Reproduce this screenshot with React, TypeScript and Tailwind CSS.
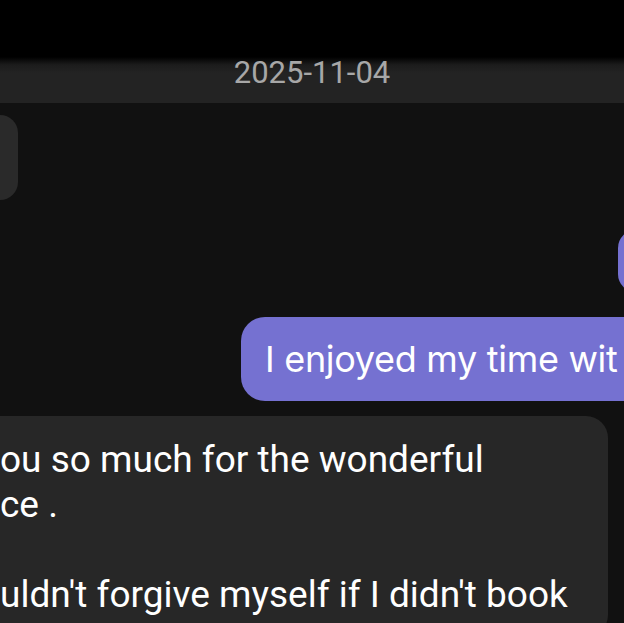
import React from 'react';

const bodyLines = [
  'ou so much for the wonderful',
  'ce .',
  '',
  "uldn't forgive myself if I didn't book",
];

export default function App() {
  return (
    <div className="h-[623px] w-full overflow-hidden bg-[#111111] flex flex-col">
      {/* blurred header with date */}
      <header className="bg-black pt-[57px] shrink-0">
        <div className="h-[46px] flex justify-center bg-[linear-gradient(to_bottom,#000000_0px,#1c1c1c_8px,#232323_16px,#232323_100%)]">
          <span className="font-['Roboto',sans-serif] text-[31px] leading-[31px] text-[#a7a7a7]">
            2025-11-04
          </span>
        </div>
      </header>

      <main className="flex flex-col pt-[12px]">
        {/* incoming, cut on the left */}
        <div className="self-start shrink-0 -ml-[60px] w-[78px] h-[85px] rounded-[18px] bg-[#2a2a2a]" />

        {/* outgoing, cut on the right */}
        <div className="self-start shrink-0 mt-[30px] ml-[618px] w-[120px] h-[62px] rounded-[18px] bg-[#7571d1]" />

        <div className="self-start shrink-0 mt-[25px] ml-[241px] w-[420px] rounded-[24px] bg-[#7571d1] pl-[24px] py-[20px] whitespace-nowrap">
          <span className="font-['Inter',sans-serif] text-[36px] leading-[44px] tracking-[-0.3px] text-white">
            I enjoyed my time wit
          </span>
        </div>

        <div className="self-start shrink-0 mt-[15px] -ml-[40px] w-[648px] rounded-[22px] bg-[#272727] pt-[21px] pb-[20px] pl-[40px]">
          {bodyLines.map((line, i) => (
            <p
              key={i}
              className="font-['Roboto',sans-serif] text-[37px] leading-[45px] h-[45px] text-white whitespace-nowrap"
            >
              {line}
            </p>
          ))}
        </div>
      </main>
    </div>
  );
}
